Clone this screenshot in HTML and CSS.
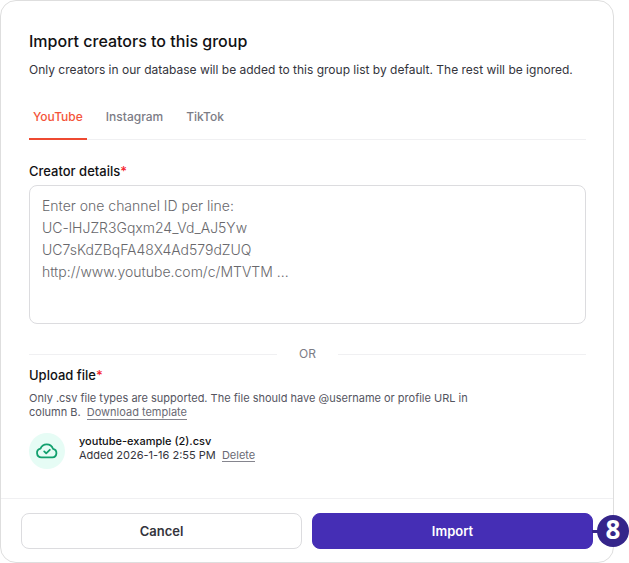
FILE: index.html
```html
<!DOCTYPE html>
<html lang="en">
<head>
<meta charset="utf-8">
<meta name="viewport" content="width=device-width, initial-scale=1">
<title>Import creators</title>
<link rel="stylesheet" href="styles.css">
</head>
<body>
<main class="dialog">
  <form class="form">
    <div class="content">
      <h1 class="title">Import creators to this group</h1>
      <p class="intro">Only creators in our database will be added to this group list by default. The rest will be ignored.</p>
      <nav class="tabs">
        <a class="tab tab-active" href="#youtube">YouTube</a>
        <a class="tab" href="#instagram">Instagram</a>
        <a class="tab" href="#tiktok">TikTok</a>
      </nav>
      <label class="label" for="details">Creator details<span class="required">*</span></label>
      <textarea class="details" id="details" placeholder="Enter one channel ID per line:
UC-lHJZR3Gqxm24_Vd_AJ5Yw
UC7sKdZBqFA48X4Ad579dZUQ
http://www.youtube.com/c/MTVTM ..."></textarea>
      <div class="divider">OR</div>
      <h2 class="label">Upload file<span class="required">*</span></h2>
      <p class="hint">Only .csv file types are supported. The file should have @username or profile URL in column B. <a class="link" href="#template">Download template</a></p>
      <div class="file">
        <span class="file-icon">
          <svg width="24" height="24" viewBox="0 0 24 24" fill="none" stroke="#12a06e" stroke-width="1.8" stroke-linecap="round" stroke-linejoin="round" aria-hidden="true">
            <path d="M6.4 18.3a4.4 4.4 0 0 1-.9-8.7A6.7 6.7 0 0 1 18 9.8a4.3 4.3 0 0 1-.6 8.5z"/>
            <path d="M9.2 12.4l2 2 3.6-3.6"/>
          </svg>
        </span>
        <div class="file-text">
          <div class="file-name">youtube-example (2).csv</div>
          <div class="file-meta">Added 2026-1-16 2:55 PM <button class="link" type="button">Delete</button></div>
        </div>
      </div>
    </div>
    <footer class="footer">
      <button class="button" type="button">Cancel</button>
      <div class="import">
        <button class="button button-primary" type="submit">Import</button>
        <span class="marker">8</span>
      </div>
    </footer>
  </form>
</main>
</body>
</html>
```
FILE: styles.css
```css
* {
  box-sizing: border-box;
}

body {
  margin: 0;
  background: #fff;
  color: #111113;
  font-family: Inter, "Liberation Sans", sans-serif;
  font-size: 12px;
  line-height: 20px;
}

.dialog {
  margin-right: 15px;
  border: 1px solid #dedede;
  border-radius: 16px;
}

.content {
  padding: 30px 27px 29px 28px;
}

.title {
  margin: 0 0 9px;
  font-size: 16px;
  font-weight: 500;
  line-height: 20px;
}

.intro {
  margin: 0;
  color: #34343c;
}

.tabs {
  display: flex;
  gap: 15px;
  margin-top: 24px;
  border-bottom: 1px solid #f0f0f2;
}

.tab {
  margin-bottom: -1px;
  padding: 3px 4px 11px;
  border-bottom: 2px solid transparent;
  color: #7c7c86;
  font-weight: 500;
  text-decoration: none;
}

.tab-active {
  border-color: #ee4a31;
  color: #f4543a;
}

.label {
  display: block;
  margin: 0;
  font-size: 13px;
  font-weight: 500;
  line-height: 20px;
}

.tabs + .label {
  margin-top: 21px;
}

.required {
  color: #f5222d;
}

.details {
  display: block;
  width: 100%;
  height: 139px;
  margin-top: 4px;
  padding: 9px 12px;
  border: 1px solid #dcdcdf;
  border-radius: 8px;
  background: #fff;
  font-family: inherit;
  font-size: 14px;
  font-weight: 300;
  line-height: 22px;
  resize: none;
}

.details::placeholder {
  color: #68686c;
}

.divider {
  display: flex;
  align-items: center;
  gap: 22px;
  margin-top: 20px;
  color: #7c7c86;
}

.divider::before,
.divider::after {
  content: "";
  flex: 1;
  height: 1px;
  background: #f0f0f2;
}

.divider + .label {
  margin-top: 1px;
}

.hint {
  max-width: 444px;
  margin: 6px 0 0;
  color: #55555f;
  font-size: 11px;
  line-height: 14px;
}

.link {
  margin: 0 0 0 3px;
  padding: 0;
  border: 0;
  border-bottom: 1px solid #85858e;
  background: none;
  color: #6a6a74;
  font: inherit;
  line-height: 12px;
  text-decoration: none;
}

.file {
  display: flex;
  align-items: center;
  gap: 14px;
  margin-top: 14px;
  font-size: 11px;
  line-height: 14px;
}

.file-icon {
  display: grid;
  place-items: center;
  width: 36px;
  height: 36px;
  border-radius: 50%;
  background: #e6fcf5;
}

.file-text {
  padding-bottom: 6px;
}

.file-name {
  font-weight: 500;
}

.file-meta {
  color: #34343c;
}

.footer {
  display: grid;
  grid-template-columns: 1fr 1fr;
  gap: 10px;
  padding: 14px 20px 13px;
  border-top: 1px solid #f0f0f2;
}

.button {
  width: 100%;
  height: 36px;
  padding: 0;
  border: 1px solid #dcdcdf;
  border-radius: 8px;
  background: #fff;
  color: #34343c;
  font-family: inherit;
  font-size: 13px;
  font-weight: 600;
}

.import {
  position: relative;
}

.button-primary {
  border-color: #452eb5;
  background: #452eb5;
  color: #fff;
}

.marker {
  position: absolute;
  top: 2px;
  right: -36px;
  width: 32px;
  height: 32px;
  border-radius: 50%;
  background: #35258a;
  color: #fff;
  font-family: "Open Sans", sans-serif;
  font-size: 26px;
  font-weight: 700;
  line-height: 28px;
  text-align: center;
}

.marker::before {
  content: "";
  position: absolute;
  top: 15px;
  right: 31px;
  width: 6px;
  height: 3px;
  background: #35258a;
}
```
